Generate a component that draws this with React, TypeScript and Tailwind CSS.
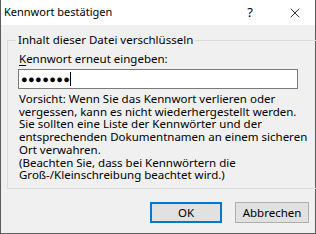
import { X } from "lucide-react";

const font = { fontFamily: '"Noto Sans", "Open Sans", sans-serif' };

const lines = [
  "Vorsicht: Wenn Sie das Kennwort verlieren oder",
  "vergessen, kann es nicht wiederhergestellt werden.",
  "Sie sollten eine Liste der Kennwörter und der",
  "entsprechenden Dokumentnamen an einem sicheren",
  "Ort verwahren.",
  "(Beachten Sie, dass bei Kennwörtern die",
  "Groß-/Kleinschreibung beachtet wird.)",
];

export default function App() {
  return (
    <div
      className="w-[316px] h-[234px] bg-[#f0f0f0] border-x border-b border-[#5a5a5a] flex flex-col text-[11.5px] text-black"
      style={font}
    >
      <div className="h-[25px] bg-white flex items-center pl-[3px] shrink-0">
        <span className="flex-1 text-[11px]">Kennwort bestätigen</span>
        <span className="w-[20px] text-center text-[13px] mr-[27px]">?</span>
        <X size={16} strokeWidth={1.2} className="mr-[12px]" />
      </div>

      <fieldset className="mt-[7px] ml-[6px] mr-[6px] h-[157px] border border-[#dcdcdc] px-[11px]">
        <legend className="ml-[-3px] px-[2px] leading-[16px]">Inhalt dieser Datei verschlüsseln</legend>
        <div className="pt-[4px] leading-[14px]">
          <span className="underline underline-offset-2">K</span>ennwort erneut eingeben:
        </div>
        <div className="mt-[3px] h-[20px] w-[280px] ml-[-1px] bg-white border border-[#7a7a7a] flex items-center pl-[2px]">
          <span className="text-[11px] font-bold tracking-[0.4px]">●●●●●●●</span>
          <span className="w-px h-[14px] bg-black" />
        </div>
        <div className="mt-[4px] leading-[12.7px] whitespace-nowrap">
          {lines.map((l) => (
            <div key={l}>{l}</div>
          ))}
        </div>
      </fieldset>

      <div className="flex justify-end gap-[13px] pr-[6px] mt-[13px]">
        <button className="w-[72px] h-[21px] bg-[#e1e1e1] border-2 border-[#0078d7]">OK</button>
        <button className="w-[74px] h-[21px] bg-[#e1e1e1] border border-[#adadad]">Abbrechen</button>
      </div>
    </div>
  );
}
